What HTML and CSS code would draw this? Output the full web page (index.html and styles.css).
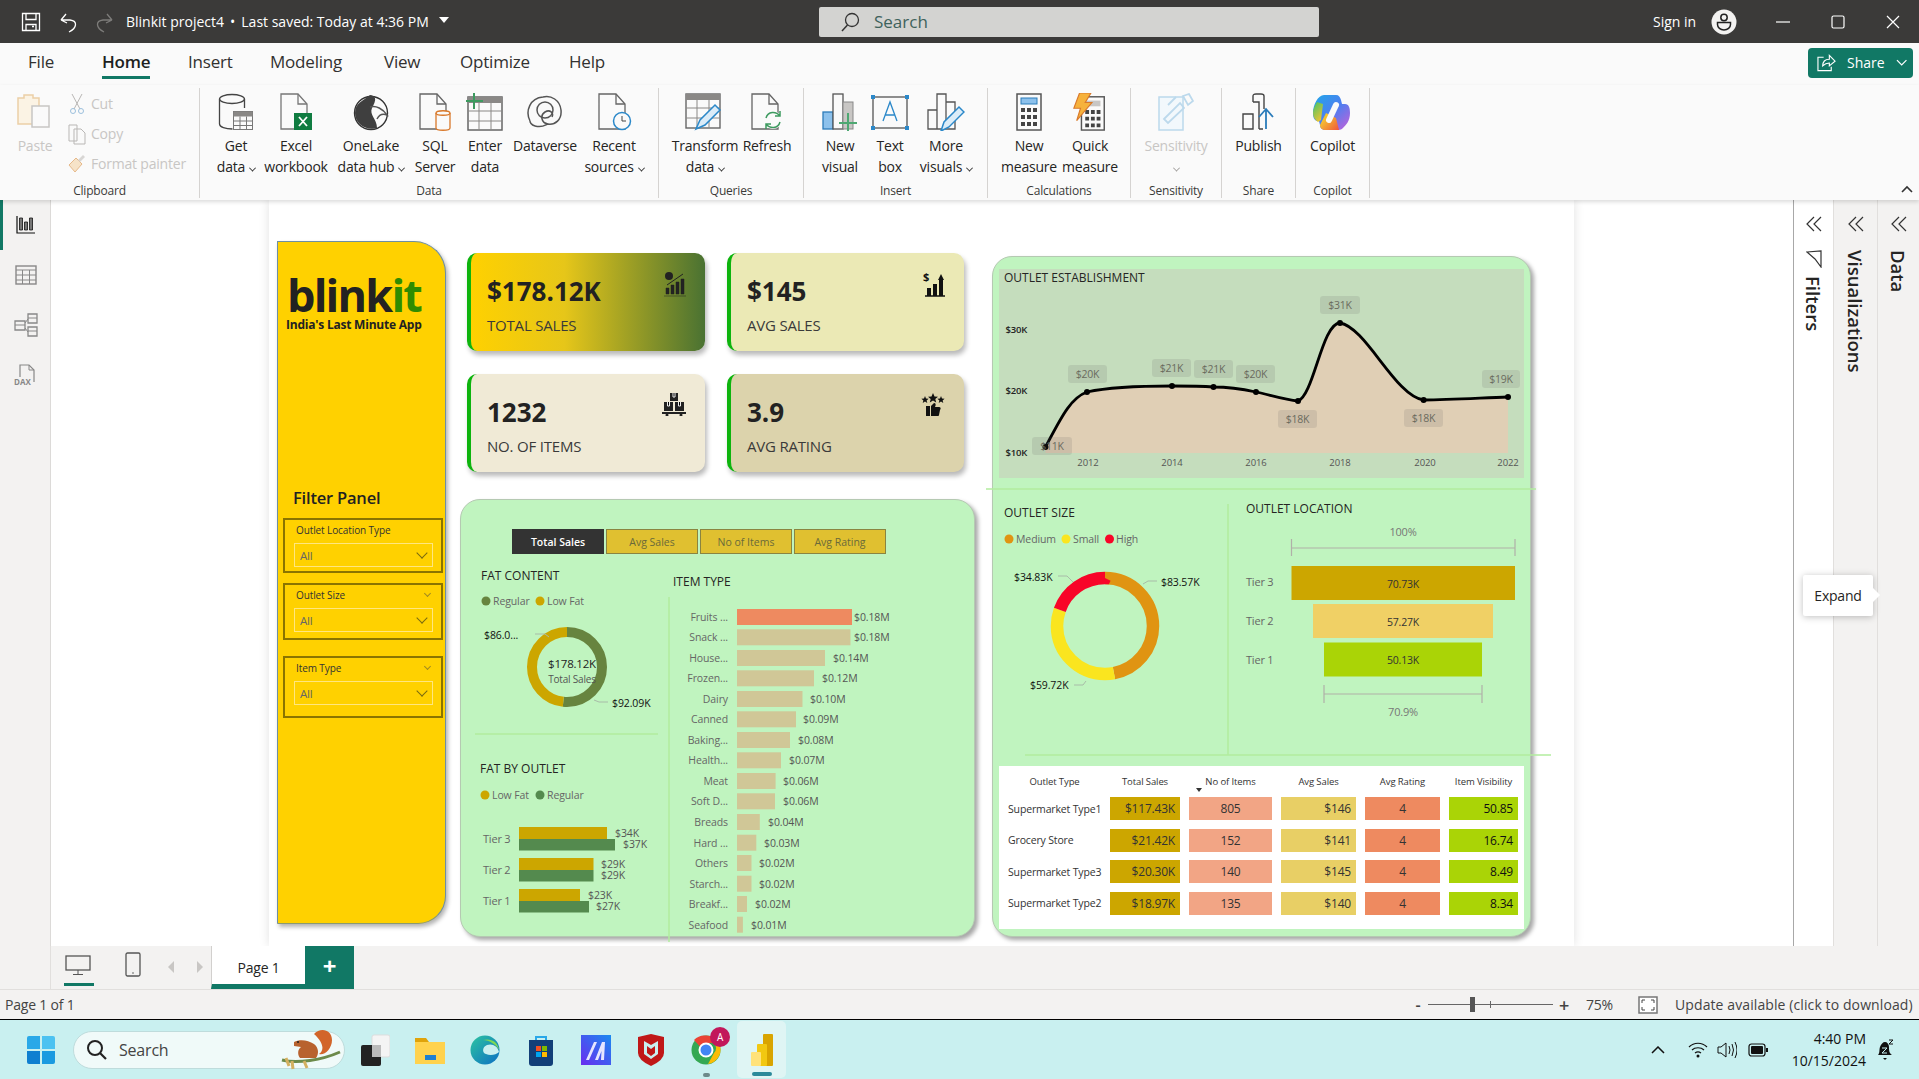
FILE: index.html
```html
<!DOCTYPE html>
<html lang="en">
<head>
<meta charset="utf-8">
<title>Blinkit project4</title>
<link rel="stylesheet" href="styles.css">
</head>
<body>
<div class="app">

<header class="titlebar">
  <div class="tb-left">
    <svg class="ic-save" width="20" height="20" viewBox="0 0 20 20"><path d="M1.5 1.5h17v17h-17zM5 1.5v6h10v-6M5 18.5v-6h10v6M11 14.5h2" fill="none" stroke="#fff" stroke-width="1.3"/></svg>
    <svg class="ic-undo" width="20" height="22" viewBox="0 0 20 22"><path d="M3 9h9c8 1 7 8-1 12M3 9l5-6M3 9l6 3" fill="none" stroke="#fff" stroke-width="1.3"/></svg>
    <svg class="ic-redo" width="20" height="22" viewBox="0 0 20 22"><path d="M17 9H8c-8 1-7 8 1 12M17 9l-5-6M17 9l-6 3" fill="none" stroke="#7d7c7a" stroke-width="1.3"/></svg>
    <span class="doc-title">Blinkit project4</span><span class="doc-dot">•</span><span class="doc-title">Last saved: Today at 4:36 PM</span>
    <span class="doc-caret"></span>
  </div>
  <div class="tb-search">
    <svg width="22" height="22" viewBox="0 0 22 22"><circle cx="13" cy="9" r="6.5" fill="none" stroke="#333" stroke-width="1.3"/><path d="M8.5 14L3 20" stroke="#333" stroke-width="1.5"/></svg>
    <span>Search</span>
  </div>
  <div class="tb-right">
    <span class="signin">Sign in</span>
    <svg class="avatar" width="26" height="26" viewBox="0 0 26 26"><circle cx="13" cy="13" r="12.5" fill="#f3f2f1"/><circle cx="13" cy="8.5" r="3.2" fill="none" stroke="#222" stroke-width="1.5"/><path d="M6.500 13.500h13v2a6.500 5.500 0 0 1-13 0z" fill="none" stroke="#222" stroke-width="1.500"/></svg>
    <svg class="winbtn" width="14" height="14" viewBox="0 0 14 14"><path d="M0 7h14" stroke="#fff" stroke-width="1.2"/></svg>
    <svg class="winbtn" width="14" height="14" viewBox="0 0 14 14"><rect x="1" y="1" width="12" height="12" rx="1.500" fill="none" stroke="#fff" stroke-width="1.2"/></svg>
    <svg class="winbtn" width="14" height="14" viewBox="0 0 14 14"><path d="M1 1l12 12M13 1L1 13" stroke="#fff" stroke-width="1.2"/></svg>
  </div>
</header>

<nav class="tabs">
  <span class="tab">File</span>
  <span class="tab tab-on">Home</span>
  <span class="tab">Insert</span>
  <span class="tab">Modeling</span>
  <span class="tab">View</span>
  <span class="tab">Optimize</span>
  <span class="tab">Help</span>
  <button class="share">
    <svg width="20" height="18" viewBox="0 0 20 18"><path d="M7 3H1v14h14v-4M6 12c0-5 3-7 7-7V1l6 6-6 5V9c-3 0-5 1-7 3z" fill="none" stroke="#fff" stroke-width="1.2"/></svg>
    <span>Share</span>
    <svg width="12" height="8" viewBox="0 0 12 8"><path d="M1 1l5 5 5-5" fill="none" stroke="#fff" stroke-width="1.300"/></svg>
  </button>
</nav>

<section class="ribbon">
  <div class="rgroup g-clip">
    <div class="rbody clip-body">
      <div class="rbtn off">
        <svg class="ricon" width="40" height="38" viewBox="0 0 40 38"><path d="M3 5h6V2h9v3h6v26H3z" fill="#fbf3e4" stroke="#eccfa6" stroke-width="1.500"/><rect x="17" y="13" width="17" height="21" fill="#fafafa" stroke="#c8c6c4" stroke-width="1.500"/></svg>
        <span>Paste</span>
      </div>
      <div class="smalls">
        <div class="small"><svg width="16" height="22" viewBox="0 0 16 22"><path d="M3 1l8 15M13 1L5 16" stroke="#b9b7b5" fill="none"/><circle cx="4" cy="18" r="2.500" fill="none" stroke="#9cc0dd"/><circle cx="12" cy="18" r="2.500" fill="none" stroke="#9cc0dd"/></svg><span>Cut</span></div>
        <div class="small"><svg width="18" height="22" viewBox="0 0 18 22"><path d="M1 2h8v16H1zM6 6h7l4 4v11H6z" fill="#fafafa" stroke="#b9b7b5"/></svg><span>Copy</span></div>
        <div class="small"><svg width="18" height="20" viewBox="0 0 18 20"><path d="M1 11l7-7 6 6-7 8z" fill="#f6e3c8" stroke="#e6b98a"/><path d="M10 6l5-5 2 2-5 5z" fill="#d8d6d4"/></svg><span>Format painter</span></div>
      </div>
    </div>
    <div class="rlabel">Clipboard</div>
  </div>

  <div class="rgroup g-data">
    <div class="rbody data-body">
      <div class="rbtn"><svg class="ricon" width="36" height="38" viewBox="0 0 36 38"><ellipse cx="14" cy="6" rx="12.500" ry="4.500" fill="none" stroke="#444" stroke-width="1.300"/><path d="M1.500 6v25c0 3 6 5 13 5M26.500 6v9" fill="none" stroke="#444" stroke-width="1.300"/><rect x="15.500" y="18.500" width="19" height="18" fill="#fafafa" stroke="#777"/><rect x="15.500" y="18.500" width="19" height="5" fill="#8a8886"/><path d="M15.500 28h19M15.500 32.500h19M22 23.500v13M28.500 23.500v13" stroke="#777"/></svg><span>Get</span><span>data<i class="chev"></i></span></div>
      <div class="rbtn"><svg class="ricon" width="36" height="38" viewBox="0 0 36 38"><path d="M3 1h17l9 10v25H3z" fill="#fafafa" stroke="#777" stroke-width="1.300"/><path d="M20 1v10h9" fill="none" stroke="#777" stroke-width="1.300"/><rect x="16" y="20" width="18" height="17" fill="#107c41"/><path d="M21 24l8 9M29 24l-8 9" stroke="#fff" stroke-width="1.800"/></svg><span>Excel</span><span>workbook</span></div>
      <div class="rbtn"><svg class="ricon" width="36" height="38" viewBox="0 0 36 38"><circle cx="18" cy="20" r="16.500" fill="#fafafa" stroke="#333" stroke-width="1.400"/><path d="M2 20C2 10 10 8 17 2c9 1 4 9 2 13-3 7 5 11 5 20-11 3-22-4-22-15z" fill="#3f3f3f"/><path d="M17 14c6-2 13 2 17 8-5-2-8 0-10 4" fill="none" stroke="#555" stroke-width="1.500"/></svg><span>OneLake</span><span>data hub<i class="chev"></i></span></div>
      <div class="rbtn"><svg class="ricon" width="36" height="38" viewBox="0 0 36 38"><path d="M3 1h17l9 10v25H3z" fill="#fafafa" stroke="#666" stroke-width="1.300"/><path d="M20 1v10h9" fill="none" stroke="#666" stroke-width="1.300"/><path d="M19 20c0-3 14-3 14 0v15c0 3-14 3-14 0z" fill="#fafafa" stroke="#d9792b" stroke-width="1.300"/><path d="M19 20c0 3 14 3 14 0" fill="none" stroke="#d9792b" stroke-width="1.300"/></svg><span>SQL</span><span>Server</span></div>
      <div class="rbtn"><svg class="ricon" width="38" height="38" viewBox="0 0 38 38"><rect x="2" y="4" width="34" height="33" fill="#fafafa" stroke="#666" stroke-width="1.500"/><rect x="2" y="4" width="34" height="6" fill="#8a8886"/><path d="M2 18h34M2 28h34M13 10v27M25 10v27" stroke="#8a8886"/><path d="M8 0v16M0 8h17" stroke="#3d9a5f" stroke-width="2"/></svg><span>Enter</span><span>data</span></div>
      <div class="rbtn"><svg class="ricon" width="38" height="38" viewBox="0 0 38 38"><path d="M4 28C-1 18 4 5 17 4c8-2 17 3 18 13s-6 15-13 14-8-9-3-12 9 1 7 5M9 33c-4-1-5-4-5-5M9 33c8 2 10-1 13-2" fill="none" stroke="#555" stroke-width="1.500"/><circle cx="19" cy="17" r="8" fill="none" stroke="#555" stroke-width="1.500"/></svg><span>Dataverse</span></div>
      <div class="rbtn"><svg class="ricon" width="36" height="38" viewBox="0 0 36 38"><path d="M3 1h17l9 10v25H3z" fill="#fafafa" stroke="#666" stroke-width="1.300"/><path d="M20 1v10h9" fill="none" stroke="#666" stroke-width="1.300"/><circle cx="26" cy="28" r="8.500" fill="#fafafa" stroke="#2b88c9" stroke-width="1.500"/><path d="M26 23v5h4" fill="none" stroke="#444"/></svg><span>Recent</span><span>sources<i class="chev"></i></span></div>
    </div>
    <div class="rlabel">Data</div>
  </div>

  <div class="rgroup g-query">
    <div class="rbody query-body">
      <div class="rbtn"><svg class="ricon" width="42" height="38" viewBox="0 0 42 38"><rect x="2" y="1" width="34" height="34" fill="#fafafa" stroke="#666" stroke-width="1.400"/><rect x="2" y="1" width="34" height="6" fill="#8a8886"/><path d="M2 15h34M2 25h34M13 7v28M25 7v28" stroke="#8a8886"/><path d="M12 36l4-9 15-15 5 5-15 15z" fill="#dbecf8" stroke="#2b88c9" stroke-width="1.500"/></svg><span>Transform</span><span>data<i class="chev"></i></span></div>
      <div class="rbtn"><svg class="ricon" width="36" height="38" viewBox="0 0 36 38"><path d="M3 1h17l9 10v25H3z" fill="#fafafa" stroke="#666" stroke-width="1.300"/><path d="M20 1v10h9" fill="none" stroke="#666" stroke-width="1.300"/><circle cx="24" cy="27" r="9" fill="#fafafa"/><path d="M17 25c2-7 10-7 14-2M31 29c-2 7-10 7-14 2M31 18v5h-5M17 36v-5h5" fill="none" stroke="#3d9a5f" stroke-width="1.500"/></svg><span>Refresh</span></div>
    </div>
    <div class="rlabel">Queries</div>
  </div>

  <div class="rgroup g-insert">
    <div class="rbody insert-body">
      <div class="rbtn"><svg class="ricon" width="36" height="38" viewBox="0 0 36 38"><rect x="1" y="19" width="10" height="17" fill="#8cc1ec" stroke="#2b7cba" stroke-width="1.300"/><rect x="11" y="1" width="10" height="35" fill="#fafafa" stroke="#555" stroke-width="1.300"/><rect x="21" y="9" width="10" height="27" fill="#c8c6c4" stroke="#888"/><path d="M26 20v18M17 30h18" stroke="#4ea872" stroke-width="2"/></svg><span>New</span><span>visual</span></div>
      <div class="rbtn"><svg class="ricon" width="40" height="38" viewBox="0 0 40 38"><rect x="3" y="4" width="34" height="31" fill="#fafafa" stroke="#555" stroke-width="1.300"/><path d="M13 28l7-19 7 19M15.500 22h9" fill="none" stroke="#2b88c9" stroke-width="1.300"/><path d="M1 2h4v4H1zM35 2h4v4h-4zM1 33h4v4H1zM35 33h4v4h-4z" fill="#2b88c9"/></svg><span>Text</span><span>box</span></div>
      <div class="rbtn"><svg class="ricon" width="38" height="38" viewBox="0 0 38 38"><path d="M1 17h9v19H1zM10 1h9v35h-9zM19 9h9v27h-9z" fill="#fafafa" stroke="#555" stroke-width="1.300"/><path d="M14 38l3-9 15-15 5 5-15 15z" fill="#dbecf8" stroke="#2b88c9" stroke-width="1.500"/></svg><span>More</span><span>visuals<i class="chev"></i></span></div>
    </div>
    <div class="rlabel">Insert</div>
  </div>

  <div class="rgroup g-calc">
    <div class="rbody calc-body">
      <div class="rbtn"><svg class="ricon" width="28" height="38" viewBox="0 0 28 38"><rect x="2" y="1" width="24" height="36" fill="#fafafa" stroke="#555" stroke-width="1.500"/><rect x="6" y="5" width="16" height="6" fill="#8cc1ec" stroke="#2b7cba"/><path d="M6 15h4v4H6zM12 15h4v4h-4zM18 15h4v4h-4zM6 22h4v4H6zM12 22h4v4h-4zM18 22h4v4h-4zM6 29h4v4H6zM12 29h4v4h-4zM18 29h4v4h-4z" fill="#444"/></svg><span>New</span><span>measure</span></div>
      <div class="rbtn"><svg class="ricon" width="38" height="40" viewBox="0 0 38 40"><rect x="10" y="4" width="24" height="35" fill="#fafafa" stroke="#555" stroke-width="1.500"/><rect x="14" y="8" width="16" height="6" fill="#c8c6c4"/><path d="M14 18h4v4h-4zM20 18h4v4h-4zM26 18h4v4h-4zM14 25h4v4h-4zM20 25h4v4h-4zM26 25h4v4h-4zM14 32h4v4h-4zM20 32h4v4h-4zM26 32h4v4h-4z" fill="#444"/><path d="M8 0h12l-6 10h7L5 29l4-13H2z" fill="#f6b23c" stroke="#d9792b" stroke-width="1.200"/></svg><span>Quick</span><span>measure</span></div>
    </div>
    <div class="rlabel">Calculations</div>
  </div>

  <div class="rgroup g-sens">
    <div class="rbody one-body">
      <div class="rbtn"><svg class="ricon" width="36" height="38" viewBox="0 0 36 38"><path d="M1 4h24v33H1z" fill="#f2f8fc" stroke="#bcd9ec" stroke-width="1.500"/><path d="M6 26L22 10l4 5-16 15zM10 12l8-8M25 3l6-2 4 7-5 4z" fill="none" stroke="#bcd9ec" stroke-width="1.800"/></svg><span>Sensitivity</span><span><i class="chev chev-off"></i></span></div>
    </div>
    <div class="rlabel">Sensitivity</div>
  </div>

  <div class="rgroup g-share">
    <div class="rbody one-body">
      <div class="rbtn"><svg class="ricon" width="36" height="38" viewBox="0 0 36 38"><path d="M2 21h10v15H2zM12 9h6v27M12 9V3q0-2 3-2h5q3 0 3 2v13M18 36h4" fill="none" stroke="#444" stroke-width="1.400"/><path d="M25 36V16M18 24l7-8 7 8" fill="none" stroke="#2b7cba" stroke-width="1.800"/></svg><span>Publish</span></div>
    </div>
    <div class="rlabel">Share</div>
  </div>

  <div class="rgroup g-copilot">
    <div class="rbody one-body">
      <div class="rbtn"><svg class="ricon" width="38" height="38" viewBox="0 0 38 38"><defs><linearGradient id="cpa" x1="0" y1="0" x2="1" y2="1"><stop offset="0" stop-color="#1fa8e8"/><stop offset=".5" stop-color="#4d7ff0"/><stop offset="1" stop-color="#c85fd8"/></linearGradient><linearGradient id="cpb" x1="0" y1="0" x2="1" y2="1"><stop offset="0" stop-color="#3fc46a"/><stop offset=".5" stop-color="#f4c430"/><stop offset="1" stop-color="#f0553d"/></linearGradient></defs><path d="M11 2h12c3 0 4 2 5 5l1 4h3c4 0 5 4 5 9 0 8-4 12-7 15-2 2-4 2-6 2H13c-4 0-6-2-6-5l-1-4H4c-3-1-4-4-4-8C0 12 5 2 11 2z" fill="url(#cpa)"/><path d="M0 20c0-4 2-8 4-11l6 2-2 16-3 2c-3-2-5-5-5-9zM7 32l6-12 10 5 3 12H13c-4 0-6-2-6-5z" fill="url(#cpb)"/><path d="M23 12l-7 15" stroke="#fafafa" stroke-width="6" stroke-linecap="round"/></svg><span>Copilot</span></div>
    </div>
    <div class="rlabel">Copilot</div>
  </div>
  <svg class="collapse" width="12" height="8" viewBox="0 0 12 8"><path d="M1 7l5-5 5 5" fill="none" stroke="#333" stroke-width="1.600"/></svg>
</section>

<main class="main">
  <aside class="leftnav">
    <div class="nav-item nav-on"><svg width="20" height="18" viewBox="0 0 20 18"><path d="M1 0v17h18" fill="none" stroke="#111" stroke-width="1.200"/><path d="M3.500 2h3v12h-3zM8.500 6h3v8h-3zM13.500 2h3v12h-3z" fill="#777" stroke="#111" stroke-width=".8"/></svg></div>
    <div class="nav-item"><svg width="22" height="20" viewBox="0 0 22 20"><rect x="1" y="1" width="20" height="18" fill="none" stroke="#888" stroke-width="1.400"/><path d="M1 5h20M1 10h20M1 15h20M7.500 5v14M14.500 5v14" stroke="#888"/></svg></div>
    <div class="nav-item"><svg width="24" height="24" viewBox="0 0 24 24"><path d="M14 1h9v9h-9zM1 8h10v9H1zM14 14h9v9h-9z" fill="none" stroke="#888" stroke-width="1.300"/><path d="M14 5h9M1 12h10M14 18h9M11 10l3-4M11 15l3 4" stroke="#888"/></svg></div>
    <div class="nav-item"><svg width="24" height="24" viewBox="0 0 24 24"><path d="M6 14V2h9l5 5v12" fill="none" stroke="#888" stroke-width="1.200"/><path d="M15 2v5h5" fill="none" stroke="#888"/><text class="dax" x="0" y="22">DAX</text></svg></div>
  </aside>

  <div class="workspace">
    <div class="page">

      <div class="filter-panel">
        <div class="logo">blink<span class="logo-it">it</span></div>
        <div class="tagline">India's Last Minute App</div>
        <div class="fp-title">Filter Panel</div>
        <div class="slicer s1"><div class="sl-head"><span>Outlet Location Type</span></div><div class="sl-drop"><span>All</span><i class="sl-chev"></i></div></div>
        <div class="slicer s2"><div class="sl-head"><span>Outlet Size</span><i class="sl-clear"></i></div><div class="sl-drop"><span>All</span><i class="sl-chev"></i></div></div>
        <div class="slicer s3"><div class="sl-head"><span>Item Type</span><i class="sl-clear"></i></div><div class="sl-drop"><span>All</span><i class="sl-chev"></i></div></div>
      </div>

      <div class="kpis">
        <div class="kpi k-sales">
          <div class="kpi-val">$178.12K</div><div class="kpi-lab">TOTAL SALES</div>
          <svg class="kpi-ic" width="22" height="25" viewBox="0 0 22 25"><circle cx="5" cy="4" r="4" fill="#222"/><path d="M2 16h3v6H2zM7 13h3v9H7zM12 10h3v12h-3zM17 7h3v15h-3zM0 24h22" fill="#222" stroke="#222" stroke-width=".5"/><path d="M3 13L19 2" stroke="#222"/></svg>
        </div>
        <div class="kpi k-avg">
          <div class="kpi-val">$145</div><div class="kpi-lab">AVG SALES</div>
          <svg class="kpi-ic" width="22" height="25" viewBox="0 0 22 25"><text class="dollar" x="0" y="9">$</text><path d="M4 16h4v8H4zM10 12h4v12h-4zM16 8h4v16h-4zM15 8l3-6 3 6z" fill="#111"/><path d="M2 24h20" stroke="#111" stroke-width="1.500"/></svg>
        </div>
        <div class="kpi k-items">
          <div class="kpi-val">1232</div><div class="kpi-lab">NO. OF ITEMS</div>
          <svg class="kpi-ic" width="24" height="23" viewBox="0 0 24 23"><path d="M8 0h8v8H8zM2 9h9v9H2zM13 9h9v9h-9zM0 19h24v2H0z" fill="#222"/><path d="M11 0v4h2V0M5.500 9v4h2V9M16.500 9v4h2V9" stroke="#eee" stroke-width="1"/><circle cx="5" cy="22" r="1.500" fill="#222"/><circle cx="19" cy="22" r="1.500" fill="#222"/></svg>
        </div>
        <div class="kpi k-rating">
          <div class="kpi-val">3.9</div><div class="kpi-lab">AVG RATING</div>
          <svg class="kpi-ic" width="24" height="23" viewBox="0 0 24 23"><path d="M12 0l1.500 3.500 3.500.3-2.700 2.300.9 3.400-3.200-1.900-3.200 1.900.9-3.400L7 3.800l3.500-.3zM4 3l1 2.500 2.600.2-2 1.700.7 2.500L4 8.600 1.700 9.900l.7-2.500-2-1.700L3 5.500zM20 3l1 2.500 2.600.2-2 1.700.7 2.500L20 8.600l-2.300 1.300.7-2.500-2-1.700 2.600-.2z" fill="#111"/><path d="M5 13h4v10H5zM10 13l3-3c2 0 2 2 1 4h4c2 0 2 2 1 3l-1 5c0 1-1 1-2 1h-6z" fill="#111"/></svg>
        </div>
      </div>

      <div class="panel panel-mid">
        <div class="mode-tabs">
          <span class="mode mode-on">Total Sales</span>
          <span class="mode">Avg Sales</span>
          <span class="mode">No of Items</span>
          <span class="mode">Avg Rating</span>
        </div>
        <svg class="panel-svg" width="515" height="438" viewBox="460 499 515 438">
          <path d="M475 734h183" class="rule"/>
          <path d="M669 597v345" class="rule"/>
          <text class="v-title" x="481" y="580">FAT CONTENT</text>
          <circle cx="486" cy="601" r="4.500" fill="#67843f"/><text class="leg" x="493" y="605">Regular</text>
          <circle cx="540" cy="601" r="4.500" fill="#cca600"/><text class="leg" x="547" y="605">Low Fat</text>
          <circle class="seg" cx="567" cy="667" r="35" pathLength="100" stroke="#67843f" stroke-dasharray="51.7 48.3"/>
          <circle class="seg" cx="567" cy="667" r="35" pathLength="100" stroke="#cca600" stroke-dasharray="48.3 51.7" stroke-dashoffset="-51.7"/>
          <text class="d-big" x="572" y="668">$178.12K</text>
          <text class="d-sub" x="572" y="683">Total Sales</text>
          <path d="M535 634h10l4 3M594 700l5 2h9" class="leader"/>
          <text class="dark" x="484" y="639">$86.0...</text>
          <text class="dark" x="612" y="707">$92.09K</text>

          <text class="v-title" x="480" y="773">FAT BY OUTLET</text>
          <circle cx="485" cy="795" r="4.500" fill="#cca600"/><text class="leg" x="492" y="799">Low Fat</text>
          <circle cx="540" cy="795" r="4.500" fill="#548a4e"/><text class="leg" x="547" y="799">Regular</text>
          <text class="axis" x="483" y="843">Tier 3</text><text class="axis" x="483" y="874">Tier 2</text><text class="axis" x="483" y="905">Tier 1</text>
          <rect x="519" y="827" width="88" height="12" fill="#cca600"/><rect x="519" y="839" width="96" height="11.500" fill="#548a4e"/>
          <rect x="519" y="858" width="74.500" height="12" fill="#cca600"/><rect x="519" y="870" width="74.500" height="11.500" fill="#548a4e"/>
          <rect x="519" y="889" width="61" height="12" fill="#cca600"/><rect x="519" y="901" width="70" height="11.500" fill="#548a4e"/>
          <text class="val" x="615" y="837">$34K</text><text class="val" x="623" y="848">$37K</text>
          <text class="val" x="601" y="868">$29K</text><text class="val" x="601" y="879">$29K</text>
          <text class="val" x="588" y="899">$23K</text><text class="val" x="596" y="910">$27K</text>

          <text class="v-title" x="673" y="586">ITEM TYPE</text>
          <g class="bars">
            <rect x="737" y="609" width="115" height="16" fill="#ee8a60"/>
            <rect x="737" y="629.3" width="113.500" height="16"/>
            <rect x="737" y="650" width="88" height="16"/>
            <rect x="737" y="670.300" width="77" height="16"/>
            <rect x="737" y="691" width="65.500" height="16"/>
            <rect x="737" y="711.300" width="59" height="16"/>
            <rect x="737" y="732" width="53" height="16"/>
            <rect x="737" y="752.300" width="44" height="16"/>
            <rect x="737" y="773" width="38.600" height="16"/>
            <rect x="737" y="793.300" width="38" height="16"/>
            <rect x="737" y="814" width="22.800" height="16"/>
            <rect x="737" y="834.700" width="19.300" height="16"/>
            <rect x="737" y="855" width="14.500" height="16"/>
            <rect x="737" y="875.700" width="14.500" height="16"/>
            <rect x="737" y="896" width="10" height="16"/>
            <rect x="737" y="916.700" width="5.900" height="16"/>
          </g>
          <g class="cats">
            <text x="728" y="621">Fruits ...</text><text x="728" y="641.300">Snack ...</text><text x="728" y="662">House...</text><text x="728" y="682.300">Frozen...</text>
            <text x="728" y="703">Dairy</text><text x="728" y="723.300">Canned</text><text x="728" y="744">Baking...</text><text x="728" y="764.300">Health...</text>
            <text x="728" y="785">Meat</text><text x="728" y="805.300">Soft D...</text><text x="728" y="826">Breads</text><text x="728" y="846.700">Hard ...</text>
            <text x="728" y="867">Others</text><text x="728" y="887.700">Starch...</text><text x="728" y="908">Breakf...</text><text x="728" y="928.700">Seafood</text>
          </g>
          <g class="val">
            <text x="854" y="621">$0.18M</text><text x="854" y="641.300">$0.18M</text><text x="833" y="662">$0.14M</text><text x="822" y="682.300">$0.12M</text>
            <text x="810" y="703">$0.10M</text><text x="803" y="723.300">$0.09M</text><text x="798" y="744">$0.08M</text><text x="789" y="764.300">$0.07M</text>
            <text x="783" y="785">$0.06M</text><text x="783" y="805.300">$0.06M</text><text x="768" y="826">$0.04M</text><text x="764" y="846.700">$0.03M</text>
            <text x="759" y="867">$0.02M</text><text x="759" y="887.700">$0.02M</text><text x="755" y="908">$0.02M</text><text x="751" y="928.700">$0.01M</text>
          </g>
        </svg>
      </div>

      <div class="panel panel-right">
        <svg class="panel-svg" width="539" height="681" viewBox="992 256 539 681">
          <rect x="999" y="269" width="525" height="209" fill="#c5ddbd"/>
          <text class="v-title" x="1004" y="282">OUTLET ESTABLISHMENT</text>
          <text class="ylab" x="1027" y="333">$30K</text><text class="ylab" x="1027" y="394">$20K</text><text class="ylab" x="1027" y="456">$10K</text>
          <path d="M1045.500 447C1060 420 1070 398 1087 392C1110 387 1140 386 1172 386C1190 386 1200 386 1213.500 387C1228 387 1242 389 1256 392C1270 395 1285 400 1298 401C1314 395 1322 323 1340 323C1366 327 1395 396 1423.600 400C1450 400 1480 398 1508 397V453H1045.500Z" fill="#e0cfb5"/>
          <g class="xlab"><text x="1088" y="466">2012</text><text x="1172" y="466">2014</text><text x="1256" y="466">2016</text><text x="1340" y="466">2018</text><text x="1425" y="466">2020</text><text x="1508" y="466">2022</text></g>
          <path d="M1045.500 447C1060 420 1070 398 1087 392C1110 387 1140 386 1172 386C1190 386 1200 386 1213.500 387C1228 387 1242 389 1256 392C1270 395 1285 400 1298 401C1314 395 1322 323 1340 323C1366 327 1395 396 1423.600 400C1450 400 1480 398 1508 397" fill="none" stroke="#000" stroke-width="2.800"/>
          <g class="pts"><circle cx="1045.500" cy="447" r="3"/><circle cx="1087" cy="392" r="3"/><circle cx="1172" cy="386" r="3"/><circle cx="1213.500" cy="387" r="3"/><circle cx="1256" cy="392" r="3"/><circle cx="1298" cy="401" r="3"/><circle cx="1340" cy="323" r="3"/><circle cx="1423.600" cy="400" r="3"/><circle cx="1508" cy="397" r="3"/></g>
          <g class="lab-box">
            <rect x="1032" y="437" width="40" height="18" rx="3"/><rect x="1320" y="296" width="40" height="18" rx="3"/><rect x="1068" y="365" width="39" height="18" rx="3"/><rect x="1152" y="359" width="39" height="18" rx="3"/><rect x="1194" y="360" width="39" height="18" rx="3"/><rect x="1236" y="365" width="39" height="18" rx="3"/><rect x="1278" y="410" width="39" height="18" rx="3"/><rect x="1404" y="409" width="39" height="18" rx="3"/><rect x="1482" y="370" width="38" height="18" rx="3"/>
          </g>
          <g class="lab-txt">
            <text x="1052" y="450">$11K</text><text x="1340" y="309">$31K</text><text x="1087.500" y="378">$20K</text><text x="1171.500" y="372">$21K</text><text x="1213.500" y="373">$21K</text><text x="1255.500" y="378">$20K</text><text x="1297.500" y="423">$18K</text><text x="1423.500" y="422">$18K</text><text x="1501" y="383">$19K</text>
          </g>
          <path d="M986 489h550" class="rule"/>
          <path d="M1228 504v251" class="rule"/>
          <path d="M1025 755h526" class="rule"/>

          <text class="v-title" x="1004" y="517">OUTLET SIZE</text>
          <circle cx="1009" cy="539" r="4.500" fill="#e09412"/><text class="leg" x="1016" y="543">Medium</text>
          <circle cx="1066" cy="539" r="4.500" fill="#fae51f"/><text class="leg" x="1073" y="543">Small</text>
          <circle cx="1109.500" cy="539" r="4.500" fill="#f80528"/><text class="leg" x="1116" y="543">High</text>
          <circle class="seg2" cx="1105" cy="626" r="48" pathLength="100" stroke="#e09412" stroke-dasharray="47 53"/>
          <circle class="seg2" cx="1105" cy="626" r="48" pathLength="100" stroke="#fae51f" stroke-dasharray="33.500 66.500" stroke-dashoffset="-47"/>
          <circle class="seg2" cx="1105" cy="626" r="48" pathLength="100" stroke="#f80528" stroke-dasharray="19.500 80.500" stroke-dashoffset="-80.500"/>
          <path d="M1058 576h9l6 6M1143 584l5-3h9M1074 685h9l3-4" class="leader"/>
          <text class="dark" x="1014" y="581">$34.83K</text><text class="dark" x="1161" y="586">$83.57K</text><text class="dark" x="1030" y="689">$59.72K</text>

          <text class="v-title" x="1246" y="513">OUTLET LOCATION</text>
          <text class="pct" x="1403" y="536">100%</text>
          <path d="M1291.500 539v17M1291.500 548H1515M1515 539v17M1324 685v18M1324 694h158M1482 685v18" class="bracket"/>
          <text class="axis" x="1246" y="586">Tier 3</text><text class="axis" x="1246" y="625">Tier 2</text><text class="axis" x="1246" y="664">Tier 1</text>
          <rect x="1291.500" y="566" width="223.500" height="34" fill="#cca600"/>
          <rect x="1313" y="604" width="180" height="34" fill="#f0d065"/>
          <rect x="1324" y="642.500" width="158" height="34" fill="#aad406"/>
          <text class="fun" x="1403" y="588">70.73K</text><text class="fun" x="1403" y="626">57.27K</text><text class="fun" x="1403" y="664">50.13K</text>
          <text class="pct" x="1403" y="716">70.9%</text>
        </svg>

        <div class="matrix">
          <span class="mh">Outlet Type</span><span class="mh">Total Sales</span><span class="mh mh-sort">No of Items</span><span class="mh">Avg Sales</span><span class="mh">Avg Rating</span><span class="mh">Item Visibility</span>

          <span class="mr">Supermarket Type1</span><span class="c c1">$117.43K</span><span class="c c2">805</span><span class="c c3">$146</span><span class="c c4">4</span><span class="c c5">50.85</span>
          <span class="mr">Grocery Store</span><span class="c c1">$21.42K</span><span class="c c2">152</span><span class="c c3">$141</span><span class="c c4">4</span><span class="c c5">16.74</span>
          <span class="mr">Supermarket Type3</span><span class="c c1">$20.30K</span><span class="c c2">140</span><span class="c c3">$145</span><span class="c c4">4</span><span class="c c5">8.49</span>
          <span class="mr">Supermarket Type2</span><span class="c c1">$18.97K</span><span class="c c2">135</span><span class="c c3">$140</span><span class="c c4">4</span><span class="c c5">8.34</span>
        </div>
      </div>

    </div>
    <div class="tooltip">Expand</div>
  </div>

  <aside class="pane pane-filters">
    <svg class="dbl" width="16" height="16" viewBox="0 0 16 16"><path d="M8 1L1 8l7 7M15 1L8 8l7 7" fill="none" stroke="#333" stroke-width="1.200"/></svg>
    <svg class="funnel" width="16" height="18" viewBox="0 0 16 18"><path d="M1 2l14-1v16L9 9z" fill="none" stroke="#333" stroke-width="1.200"/></svg>
    <span class="vtext">Filters</span>
  </aside>
  <aside class="pane pane-viz">
    <svg class="dbl" width="16" height="16" viewBox="0 0 16 16"><path d="M8 1L1 8l7 7M15 1L8 8l7 7" fill="none" stroke="#333" stroke-width="1.200"/></svg>
    <span class="vtext vtext-viz">Visualizations</span>
  </aside>
  <aside class="pane pane-data">
    <svg class="dbl" width="16" height="16" viewBox="0 0 16 16"><path d="M8 1L1 8l7 7M15 1L8 8l7 7" fill="none" stroke="#333" stroke-width="1.200"/></svg>
    <span class="vtext vtext-viz">Data</span>
  </aside>
</main>

<div class="pagebar">
  <div class="pb-views">
    <div class="pb-desk">
      <svg width="26" height="20" viewBox="0 0 26 20"><rect x="1" y="1" width="24" height="14" fill="none" stroke="#555" stroke-width="1.300"/><path d="M13 15v4M8 19.500h10" stroke="#555"/></svg>
      <i class="pb-under"></i>
    </div>
    <svg class="pb-phone" width="16" height="25" viewBox="0 0 16 25"><rect x="1" y="1" width="14" height="23" rx="1.500" fill="none" stroke="#555" stroke-width="1.300"/><circle cx="8" cy="21" r=".8" fill="#555"/></svg>
    <svg class="pb-arrow" width="7" height="12" viewBox="0 0 7 12"><path d="M6 0v12L0 6z" fill="#c8c6c4"/></svg>
    <svg class="pb-arrow" width="7" height="12" viewBox="0 0 7 12"><path d="M1 0v12l6-6z" fill="#c8c6c4"/></svg>
  </div>
  <div class="pg-tab">Page 1</div>
  <div class="pg-add">+</div>
</div>

<footer class="statusbar">
  <span class="st-page">Page 1 of 1</span>
  <div class="st-right">
    <span class="st-sym">-</span>
    <div class="slider"><i class="sl-thumb"></i><i class="sl-tick"></i></div>
    <span class="st-sym st-plus">+</span>
    <span class="st-zoom">75%</span>
    <svg class="st-fit" width="20" height="18" viewBox="0 0 20 18"><rect x="1" y="1" width="18" height="16" fill="#fff" stroke="#777" stroke-width="1.500"/><path d="M4 7V4h3M13 4h3v3M16 11v3h-3M7 14H4v-3" fill="none" stroke="#444"/></svg>
    <span class="st-update">Update available (click to download)</span>
  </div>
</footer>

<div class="taskbar">
  <svg class="tk-start" width="30" height="30" viewBox="0 0 30 30"><path d="M1 3q0-2 2-2h11v13H1z" fill="#29a8e8"/><path d="M16 1h11q2 0 2 2v11H16z" fill="#4cc2f1"/><path d="M1 16h13v13H3q-2 0-2-2z" fill="#0f7fd0"/><path d="M16 16h13v11q0 2-2 2H16z" fill="#1a9ae0"/></svg>
  <div class="tk-search">
    <svg width="22" height="22" viewBox="0 0 22 22"><circle cx="9" cy="9" r="7" fill="none" stroke="#222" stroke-width="2"/><path d="M14 14l6 6" stroke="#222" stroke-width="2.200"/></svg>
    <span>Search</span>
    <svg class="squirrel" width="62" height="42" viewBox="0 0 62 42"><path d="M2 32c15 4 40 0 58-8" fill="none" stroke="#6c8a4a" stroke-width="3"/><path d="M34 6c6-7 18-5 18 6 0 9-8 16-13 14 6-4 4-12-5-20z" fill="#d2652a"/><path d="M14 14c6-3 14-2 20 2 5 4 5 10 2 14H20c-3-4-2-9 1-11l-7-1z" fill="#b8622e"/><circle cx="18" cy="14" r="1" fill="#222"/><path d="M6 30l3 8M12 33l1 8M24 33l3 7" stroke="#d4b060" stroke-width="3"/></svg>
  </div>
  <div class="tk-icons">
    <div class="tk-app"><svg width="30" height="32" viewBox="0 0 30 32"><rect x="12" y="1" width="18" height="22" rx="2" fill="#f4f4f4" stroke="#ddd"/><rect x="1" y="11" width="20" height="21" rx="2" fill="#222"/><rect x="12" y="11" width="9" height="12" fill="#bbb"/></svg></div>
    <div class="tk-app"><svg width="30" height="30" viewBox="0 0 30 30"><path d="M0 3h11l3 4h16v-1V29H0z" fill="#e0a30a"/><rect y="7" width="30" height="22" fill="#ffd24d"/><rect x="10" y="20" width="11" height="5" fill="#1f7fd0"/></svg></div>
    <div class="tk-app"><svg width="30" height="30" viewBox="0 0 30 30"><defs><linearGradient id="edge" x1="0" y1="0" x2="1" y2="1"><stop offset="0" stop-color="#2cc4a0"/><stop offset="1" stop-color="#0d6fc4"/></linearGradient></defs><circle cx="15" cy="15" r="14.500" fill="url(#edge)"/><path d="M29 17c-1-6-7-9-12-7-5 2-5 8-1 9 4 2 10 1 13-2z" fill="#c9f0f0"/><path d="M29 15C28 6 20 3 13 5c6 0 14 5 16 10z" fill="#7ed957"/></svg></div>
    <div class="tk-app"><svg width="26" height="32" viewBox="0 0 26 32"><path d="M8 6V3h10v3" fill="none" stroke="#29a8e8" stroke-width="2"/><path d="M1 6h24v23q0 3-3 3H4q-3 0-3-3z" fill="#123f78"/><rect x="8" y="12" width="5" height="5" fill="#f25022"/><rect x="14" y="12" width="5" height="5" fill="#7fba00"/><rect x="8" y="18" width="5" height="5" fill="#00a4ef"/><rect x="14" y="18" width="5" height="5" fill="#ffb900"/></svg></div>
    <div class="tk-app"><svg width="30" height="30" viewBox="0 0 30 30"><defs><linearGradient id="mm" x1="0" y1="1" x2="1" y2="0"><stop offset="0" stop-color="#6a2cf0"/><stop offset="1" stop-color="#1a8af0"/></linearGradient></defs><rect width="30" height="30" fill="url(#mm)"/><path d="M5 25l8-18h3l-8 18zM14 25l7-18h3l-1 18h-3l.5-9-3.500 9z" fill="#e6e6ff"/></svg></div>
    <div class="tk-app"><svg width="28" height="32" viewBox="0 0 28 32"><path d="M1 3l13-3 13 3v16q0 7-13 13Q1 26 1 19z" fill="#c01818"/><path d="M7 7l7 4 7-4v13l-7 5-7-5z" fill="#c9f0f0"/><path d="M10 12l4 3 4-3v7l-4 3-4-3z" fill="#c01818"/></svg></div>
    <div class="tk-app tk-chrome"><svg width="30" height="30" viewBox="0 0 30 30"><circle cx="15" cy="15" r="14.500" fill="#34a853"/><path d="M15 .5A14.500 14.500 0 0 1 28 8H15a7 7 0 0 0-6 3.500L3 5A14.500 14.500 0 0 1 15 .5z" fill="#ea4335"/><path d="M28 8a14.500 14.500 0 0 1-11 21l6-11a7 7 0 0 0 0-10z" fill="#fbbc04"/><circle cx="15" cy="15" r="6.500" fill="#4285f4" stroke="#fff" stroke-width="2"/></svg><span class="badge">A</span><i class="run-dot"></i></div>
    <div class="tk-app tk-active"><svg width="22" height="32" viewBox="0 0 22 32"><rect x="12" y="0" width="10" height="32" rx="1" fill="#d9a400"/><rect x="6" y="10" width="10" height="22" rx="1" fill="#f2c811"/><rect x="0" y="18" width="10" height="14" rx="1" fill="#ffe27a"/></svg><i class="run-bar"></i></div>
  </div>
  <div class="tray">
    <svg class="t-chev" width="14" height="8" viewBox="0 0 14 8"><path d="M1 7l6-6 6 6" fill="none" stroke="#111" stroke-width="1.500"/></svg>
    <svg class="t-wifi" width="20" height="16" viewBox="0 0 20 16"><path d="M1 5c5-5 13-5 18 0M4 8c3-3 9-3 12 0M7 11c2-1.500 4-1.500 6 0" fill="none" stroke="#111" stroke-width="1.200"/><circle cx="10" cy="14" r="1.500" fill="#111"/></svg>
    <svg class="t-vol" width="20" height="18" viewBox="0 0 20 18"><path d="M1 6h3l5-4v14l-5-4H1z" fill="none" stroke="#111"/><path d="M12 5q2 4 0 8M15 3q3 6 0 12M18 1q4 8 0 16" fill="none" stroke="#111"/></svg>
    <svg class="t-bat" width="20" height="14" viewBox="0 0 20 14"><rect x="1" y="1" width="16" height="12" rx="2.500" fill="none" stroke="#111" stroke-width="1.200"/><rect x="3" y="3" width="12" height="8" rx="1" fill="#111"/><rect x="18" y="5" width="2" height="4" fill="#111"/></svg>
    <div class="clock"><span>4:40 PM</span><span>10/15/2024</span></div>
    <svg class="t-bell" width="18" height="22" viewBox="0 0 18 22"><path d="M2 16c2-2 1-5 2-8s3-5 5-5 4 2 4 5 0 6 3 8z" fill="#111"/><path d="M7 19h4l-2 2z" fill="#111"/><path d="M6 9h5l-5 5h5" stroke="#c9f0f0" fill="none"/><path d="M13 1h4l-4 4h4" stroke="#111" fill="none"/></svg>
  </div>
</div>

</div>
</body>
</html>
```

FILE: styles.css
```css
* { box-sizing: border-box; }
html, body { margin: 0; padding: 0; }
body { font-family: "Open Sans", "Noto Sans", "Liberation Sans", sans-serif; color: #252423; background: #fff; letter-spacing: -.2px; }
.app { width: 1919px; height: 1079px; display: flex; flex-direction: column; overflow: hidden; }

/* title bar */
.titlebar { height: 43px; flex: none; background: #3b3a39; display: grid; grid-template-columns: 819px 500px 1fr; align-items: center; color: #fff; font-size: 14px; letter-spacing: 0; }
.tb-left { display: flex; align-items: center; padding-left: 21px; }
.ic-undo { margin-left: 17px; }
.ic-redo { margin-left: 17px; margin-right: 11px; }
.doc-dot { margin: 0 6px; }
.doc-caret { width: 0; height: 0; margin-left: 10px; margin-top: -3px; border: 5.500px solid transparent; border-top: 6px solid #fff; border-bottom: 0; }
.tb-search { height: 30px; background: #d3d3d1; border-radius: 2px; display: flex; align-items: center; padding-left: 20px; gap: 13px; color: #3e625c; font-size: 17px; }
.tb-right { display: flex; align-items: center; padding-left: 334px; }
.signin { width: 58px; }
.winbtn { margin-left: 41px; }
.avatar + .winbtn { margin-left: 39px; }

/* tabs */
.tabs { height: 42px; flex: none; background: #fafafa; display: grid; grid-template-columns: 74px 86px 82px 114px 76px 109px 1239px 105px; padding: 0 6px 0 28px; align-items: center; font-size: 17px; color: #323130; }
.tab { justify-self: start; line-height: 22px; padding: 3px 0 3px; border-bottom: 3px solid transparent; margin-top: -1px; }
.tab-on { font-weight: 600; color: #201f1e; border-bottom-color: #117865; }
.share { grid-column: 8; justify-self: end; width: 105px; height: 30px; margin-top: -3px; background: #117865; color: #fff; border: 0; border-radius: 4px; display: flex; align-items: center; padding: 0 6px 0 9px; gap: 11px; font: inherit; font-size: 14px; }

/* ribbon */
.ribbon { height: 115px; flex: none; background: #fafafa; display: flex; align-items: flex-start; padding-top: 3px; font-size: 14px; color: #252423; position: relative; z-index: 3; box-shadow: 0 2px 4px rgba(0,0,0,.14); }
.rgroup { height: 110px; border-right: 1px solid #d5d3d1; display: flex; flex-direction: column; flex: none; }
.g-clip { width: 200px; } .g-data { width: 459px; } .g-query { width: 145px; } .g-insert { width: 184px; }
.g-calc { width: 143px; } .g-sens { width: 91px; } .g-share { width: 74px; } .g-copilot { width: 74px; }
.rbody { flex: 1; display: grid; justify-items: center; padding-top: 5px; }
.rlabel { height: 16px; line-height: 18px; text-align: center; font-size: 12px; color: #3b3a39; }
.rbtn { display: flex; flex-direction: column; align-items: center; line-height: 21px; width: max-content; white-space: nowrap; }
.ricon { height: 38px; margin-bottom: 4px; }
.off { color: #c8c6c4; }
.chev { display: inline-block; width: 5px; height: 5px; margin-left: 5px; border-right: 1.300px solid #333; border-bottom: 1.300px solid #333; transform: rotate(45deg) translate(-1px,-1px); }
.chev-off { border-color: #a19f9d; margin-left: 0; }
.clip-body { grid-template-columns: 64px 1fr; justify-items: start; padding-left: 3px; }
.clip-body .rbtn { justify-self: center; }
.smalls { display: flex; flex-direction: column; gap: 7px; padding-left: 1px; color: #c8c6c4; margin-top: -1px; }
.small { display: flex; align-items: center; height: 23px; gap: 5px; }
.small svg { width: 18px; height: 22px; flex: none; }
.data-body { grid-template-columns: 72px 48px 102px 26px 74px 46px 92px; }
.query-body { grid-template-columns: 92px 32px; }
.insert-body { grid-template-columns: 72px 28px 84px; }
.calc-body { grid-template-columns: 82px 40px; }
.one-body { grid-template-columns: 1fr; }
.g-sens .rbtn { color: #c8c6c4; }
.collapse { position: absolute; right: 6px; top: 100px; }

/* main */
.main { flex: 1; min-height: 0; display: flex; background: #fff; }
.leftnav { width: 51px; flex: none; background: #f3f2f1; border-right: 1px solid #dcdad8; }
.nav-item { height: 50px; display: flex; align-items: center; justify-content: center; padding-left: 1px; }
.nav-on { border-left: 3px solid #117865; padding-right: 2px; padding-left: 0; }
.dax { font-size: 8px; font-weight: 700; fill: #888; letter-spacing: 0; }
.workspace { flex: 1; position: relative; padding-left: 218px; background: #fff; }
.page { width: 1305px; height: 100%; position: relative; background: #fff; box-shadow: 0 0 10px rgba(0,0,0,.12); clip-path: inset(0 -12px 0 -12px); }
.pane { flex: none; position: relative; display: flex; flex-direction: column; align-items: center; padding-top: 16px; }
.pane-filters { width: 40px; background: #fff; border-left: 1px solid #a8a8a8; }
.pane-viz { width: 44px; background: #f3f2f1; border-left: 1px solid #e1dfdd; }
.pane-data { width: 42px; background: #f3f2f1; border-left: 1px solid #e1dfdd; }
.funnel { margin-top: 18px; }
.vtext { writing-mode: vertical-rl; font-size: 18.500px; font-weight: 600; color: #252423; margin-top: 8px; letter-spacing: 0; }
.vtext-viz { margin-top: 18px; }
.tooltip { position: absolute; left: 1752px; top: 375px; width: 70px; height: 41px; background: #fff; display: flex; align-items: center; justify-content: center; font-size: 14px; box-shadow: 0 1px 7px rgba(0,0,0,.25); border-radius: 2px; z-index: 5; }
.tooltip::after { content: ""; position: absolute; right: -5px; top: 15px; width: 10px; height: 10px; background: #fff; transform: rotate(45deg); }

/* filter panel */
.filter-panel { position: absolute; left: 8px; top: 41px; width: 169px; height: 683px; background: #ffd100; border-radius: 0 32px 28px 0; border: 1px solid #6d8fa3; border-bottom-color: #8a9a70; box-shadow: 2px 3px 4px rgba(0,0,0,.3); padding: 28px 0 0 5px; }
.logo { font-size: 45px; line-height: 50px; font-weight: 700; color: #222; letter-spacing: -1.800px; padding-left: 4px; }
.logo-it { color: #2f8c00; }
.tagline { font-size: 12px; font-weight: 700; color: #222; line-height: 16px; margin-top: -3px; padding-left: 3px; letter-spacing: -.22px; }
.fp-title { font-size: 16.500px; font-weight: 600; color: #222; margin-top: 153px; padding-left: 10px; line-height: 24px; }
.slicer { width: 160px; border: 2px solid #8a7400; padding: 2px 9px 0 9px; }
.s1 { height: 55px; margin-top: 8px; }
.s2 { height: 57px; margin-top: 10px; }
.s3 { height: 62px; margin-top: 16px; }
.sl-head { display: flex; justify-content: space-between; align-items: center; font-size: 10px; line-height: 16px; color: #333; padding-left: 2px; letter-spacing: -.1px; }
.sl-clear { width: 5px; height: 5px; border-right: 1px solid #a08a20; border-bottom: 1px solid #a08a20; transform: rotate(45deg); margin-right: 2px; margin-top: -3px; }
.sl-drop { height: 24px; border: 1.500px solid #ffe680; margin-top: 5px; display: flex; align-items: center; justify-content: space-between; padding: 0 6px 0 5px; font-size: 11.500px; color: #666; width: 139px; }
.sl-chev { width: 8px; height: 8px; border-right: 1px solid #7a6a10; border-bottom: 1px solid #7a6a10; transform: rotate(45deg); margin-top: -4px; }

/* kpi */
.kpis { position: absolute; left: 198px; top: 53px; display: grid; grid-template-columns: 238px 237px; grid-auto-rows: 98px; column-gap: 22px; row-gap: 23px; }
.kpi { position: relative; border-radius: 10px; border-left: 4px solid #0eb40e; box-shadow: 2px 4px 5px rgba(0,0,0,.28); padding: 21px 0 0 16px; }
.k-sales { background: linear-gradient(90deg, #ffd100 0%, #e6c619 40%, #4a7232 100%); }
.k-avg { background: #ebe9b5; }
.k-items { background: #f0ead6; }
.k-rating { background: #dcd3ac; }
.kpi-val { font-size: 26px; font-weight: 700; line-height: 34px; color: #222; letter-spacing: 0; }
.kpi-lab { font-size: 15px; line-height: 22px; margin-top: 6px; color: #3a3a3a; letter-spacing: -.2px; }
.kpi-ic { position: absolute; right: 19px; top: 19px; }
.dollar { font-size: 11px; font-weight: 700; fill: #111; }

/* panels */
.panel { position: absolute; background: #c0f4bf; border-radius: 20px; box-shadow: 3px 3px 4px rgba(0,0,0,.35); border: 1px solid #b5c9b2; }
.panel-mid { left: 191px; top: 299px; width: 515px; height: 438px; }
.panel-right { left: 723px; top: 56px; width: 539px; height: 681px; }
.panel-svg { position: absolute; left: -1px; top: -1px; overflow: visible; }
.mode-tabs { position: absolute; left: 51px; top: 29px; display: flex; gap: 2px; z-index: 1; }
.mode { width: 92px; height: 25px; background: #e0c030; border: 1px solid #8a8440; color: #6a6a3a; font-size: 10.500px; display: flex; align-items: center; justify-content: center; letter-spacing: 0; }
.mode-on { background: #333; border-color: #333; color: #fff; font-weight: 600; }
.rule { stroke: #b2ec9e; stroke-width: 1.500; fill: none; }
.leader { stroke: #a8bca8; fill: none; }
.bracket { stroke: #b0b0a8; stroke-width: 1.200; fill: none; }
.seg { fill: none; stroke-width: 10; transform: rotate(-90deg); transform-origin: 567px 667px; }
.seg2 { fill: none; stroke-width: 12.500; transform: rotate(-90deg); transform-origin: 1105px 626px; }
.v-title { font-size: 12px; fill: #252423; letter-spacing: 0; }
.leg { font-size: 10.500px; fill: #666; letter-spacing: -.1px; }
.d-big { font-size: 11.500px; fill: #222; text-anchor: middle; letter-spacing: -.2px; }
.d-sub { font-size: 10px; fill: #555; text-anchor: middle; }
.dark { font-size: 10.500px; fill: #111; letter-spacing: -.1px; }
.axis { font-size: 11px; fill: #666; }
.val { font-size: 10.500px; fill: #555; letter-spacing: -.1px; }
.cats text { font-size: 10.500px; fill: #666; text-anchor: end; letter-spacing: -.1px; }
.bars rect { fill: #d0c797; }
.bars rect:first-child { fill: #ee8a60; }
.ylab { font-size: 9.500px; font-weight: 600; fill: #222; text-anchor: end; letter-spacing: -.2px; }
.xlab text { font-size: 9.500px; fill: #555; text-anchor: middle; letter-spacing: -.1px; }
.pts circle { fill: #000; }
.lab-box rect { fill: rgba(90,90,90,.14); }
.lab-txt text { font-size: 10.500px; fill: #6a6a5e; text-anchor: middle; }
.pct { font-size: 11px; fill: #777; text-anchor: middle; }
.fun { font-size: 10.500px; fill: #333; text-anchor: middle; }

/* matrix */
.matrix { position: absolute; left: 6px; top: 509px; width: 525px; height: 163px; background: #fff; display: grid; grid-template-columns: 93px 70px 83px 75px 75px 69px; grid-template-rows: 22.500px 23px 23px 23px 23px; column-gap: 9px; row-gap: 8.500px; padding-left: 9px; align-items: center; }
.mh { font-size: 9.500px; color: #333; text-align: center; letter-spacing: -.1px; margin-top: 8px; white-space: nowrap; }
.mh-sort { position: relative; }
.mh-sort::after { content: ""; position: absolute; left: 7px; top: 13px; border: 3px solid transparent; border-top: 4px solid #333; border-bottom: 0; }
.mr { font-size: 10.500px; color: #333; white-space: nowrap; letter-spacing: -.15px; }
.c { height: 23px; display: flex; align-items: center; font-size: 12px; color: #333; padding: 0 5px; }
.c1 { background: #cca600; justify-content: flex-end; }
.c2 { background: #f2a585; justify-content: center; }
.c3 { background: #e8cf65; justify-content: flex-end; }
.c4 { background: #ee8a60; justify-content: center; }
.c5 { background: #aad406; justify-content: flex-end; color: #111; }

/* page bar */
.pagebar { height: 44px; flex: none; background: #f3f2f1; display: flex; border-bottom: 1px solid #e1dfdd; }
.pb-views { width: 211px; padding-left: 51px; display: flex; align-items: flex-start; position: relative; }
.pb-views::before { content: ""; position: absolute; left: 50px; top: 0; bottom: 0; width: 1px; background: #e1dfdd; }
.pb-desk { width: 53px; display: flex; flex-direction: column; align-items: center; padding-top: 9px; }
.pb-under { width: 30px; height: 3px; background: #117865; margin-top: 8px; margin-left: 2px; }
.pb-phone { margin-top: 6px; margin-left: 21px; }
.pb-arrow { margin-top: 15px; margin-left: 27px; }
.pb-arrow + .pb-arrow { margin-left: 21px; }
.pg-tab { width: 94px; background: #fff; border-left: 1px solid #d2d0ce; border-bottom: 5px solid #117865; display: flex; align-items: center; justify-content: center; font-size: 14px; padding-top: 5px; }
.pg-add { width: 49px; background: #117865; color: #fff; font-size: 24px; font-weight: 700; display: flex; align-items: center; justify-content: center; line-height: 1; padding-bottom: 4px; }

/* status */
.statusbar { height: 30px; flex: none; background: #f3f2f1; display: flex; align-items: center; justify-content: space-between; padding-left: 5px; font-size: 14px; color: #444; border-bottom: 1px solid #000; }
.st-right { display: flex; align-items: center; }
.st-sym { width: 10px; text-align: center; font-weight: 600; font-size: 16px; }
.slider { width: 125px; height: 1px; background: #666; position: relative; margin: 0 6px 0 5px; }
.sl-thumb { position: absolute; left: 42px; top: -7px; width: 5px; height: 15px; background: #555; }
.sl-tick { position: absolute; left: 62px; top: -3px; width: 1px; height: 7px; background: #666; }
.st-plus { font-size: 18px; }
.st-zoom { margin-left: 17px; width: 36px; }
.st-fit { margin-left: 16px; }
.st-update { margin-left: 17px; width: 244px; white-space: nowrap; letter-spacing: .1px; }

/* taskbar */
.taskbar { height: 59px; flex: none; background: #c9f0f0; display: flex; align-items: center; padding-left: 26px; color: #222; }
.tk-start { flex: none; }
.tk-search { width: 272px; height: 38px; margin-left: 17px; border-radius: 19px; background: #f0faf9; border: 1px solid #bfdcdc; display: flex; align-items: center; padding-left: 12px; gap: 11px; font-size: 16px; position: relative; color: #444; }
.squirrel { position: absolute; right: 2px; top: -4px; }
.tk-icons { display: flex; margin-left: 2px; }
.tk-app { width: 55.300px; height: 59px; display: flex; align-items: center; justify-content: center; position: relative; }
.tk-active::before { content: ""; position: absolute; left: 3px; right: 3px; top: 1px; bottom: 1px; background: #dff5f4; border-radius: 5px; }
.tk-active svg { position: relative; }
.badge { position: absolute; right: 4px; top: 7px; width: 20px; height: 20px; border-radius: 50%; background: #c2185b; color: #fff; font-size: 10px; display: flex; align-items: center; justify-content: center; }
.run-dot { position: absolute; left: 24px; bottom: 2px; width: 7px; height: 4px; background: #6c8a8a; border-radius: 2px; }
.run-bar { position: absolute; left: 18px; bottom: 3px; width: 20px; height: 4px; background: #2b8a9a; border-radius: 2px; }
.tray { margin-left: auto; display: flex; align-items: center; padding-right: 25px; }
.t-wifi { margin-left: 23px; }
.t-vol { margin-left: 9px; }
.t-bat { margin-left: 11px; }
.clock { margin-left: 12px; display: flex; flex-direction: column; align-items: flex-end; font-size: 14px; line-height: 22px; color: #111; letter-spacing: 0; width: 86px; }
.t-bell { margin-left: 10px; }
```
